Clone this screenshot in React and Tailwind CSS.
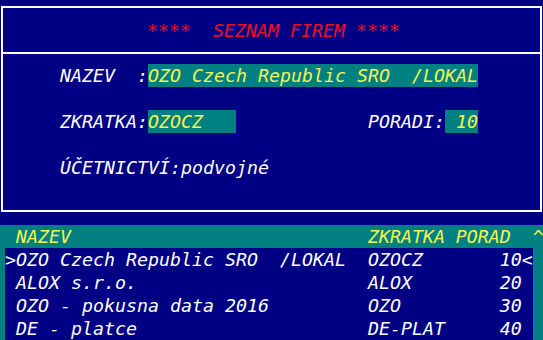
import React from "react";

const firms = [
  { sel: true, name: "OZO Czech Republic SRO  /LOKAL", code: "OZOCZ", order: "10" },
  { sel: false, name: "ALOX s.r.o.", code: "ALOX", order: "20" },
  { sel: false, name: "OZO - pokusna data 2016", code: "OZO", order: "30" },
  { sel: false, name: "DE - platce", code: "DE-PLAT", order: "40" },
];

const pad = (s, n) => s + " ".repeat(Math.max(0, n - s.length));

const Field = ({ children }) => (
  <span className="inline-block h-[23px] bg-[#008080] text-[#f4f454]">{children}</span>
);

export default function App() {
  return (
    <div className="w-[543px] h-[340px] overflow-hidden bg-[#000084] text-white italic text-[18.27px] leading-[23px] whitespace-pre font-['DejaVu_Sans_Mono','Liberation_Mono',monospace]">
      {/* Header form */}
      <div className="pt-[6px] px-[1px]">
        <div className="h-[206px] border-2 border-white flex flex-col">
          <div className="h-[44px] flex items-center pl-[144px] text-[#ec1020]">
            {"****  SEZNAM FIREM ****"}
          </div>
          <div className="border-t-2 border-white flex-1 pt-[10px] pl-[57px]">
            <div>
              {"NAZEV  :"}
              <Field>OZO Czech Republic SRO  /LOKAL</Field>
            </div>
            <div className="h-[23px]" />
            <div>
              {"ZKRATKA:"}
              <Field>{"OZOCZ   "}</Field>
              {"            PORADI:"}
              <Field>{" 10"}</Field>
            </div>
            <div className="h-[23px]" />
            <div>ÚČETNICTVÍ:podvojné</div>
          </div>
        </div>
      </div>

      {/* Firm list */}
      <div className="mt-[13px] h-[115px] bg-[#008080] pl-[5px]">
        <div className="h-[23px] text-[#f4f454]">
          {" NAZEV                           ZKRATKA PORAD  ^"}
        </div>
        <div className="w-[528px] h-[92px] bg-[#000084]">
          {firms.map((f) => (
            <div key={f.code} className="h-[23px]">
              {(f.sel ? ">" : " ") +
                pad(f.name, 30) +
                "  " +
                pad(f.code, 8) +
                "    " +
                f.order +
                (f.sel ? "<" : " ")}
            </div>
          ))}
        </div>
      </div>
    </div>
  );
}
